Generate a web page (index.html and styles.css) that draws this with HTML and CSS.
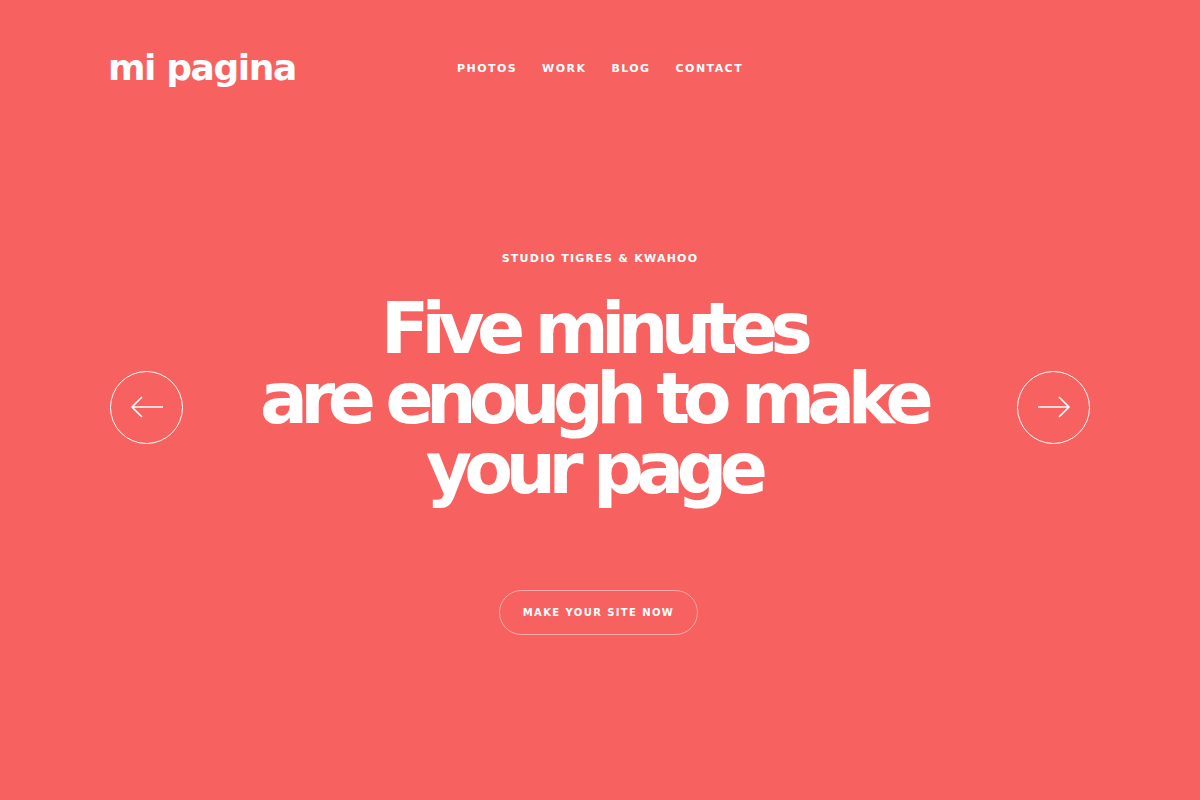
FILE: index.html
```html
<!DOCTYPE html>
<html lang="en">
<head>
<meta charset="utf-8">
<title>mi pagina</title>
<link rel="stylesheet" href="styles.css">
</head>
<body>
<div class="page">
  <header class="header">
    <div class="logo">mi pagina</div>
    <nav class="nav">
      <a href="#">Photos</a>
      <a href="#">Work</a>
      <a href="#">Blog</a>
      <a href="#">Contact</a>
    </nav>
  </header>
  <main class="hero">
    <p class="kicker">Studio Tigres &amp; Kwahoo</p>
    <div class="slider">
      <button class="arrow" aria-label="Previous">
        <svg width="34" height="24" viewBox="0 0 34 24"><path d="M33 12H2M12 2L2 12L12 22" fill="none" stroke="#fff" stroke-width="1.6"/></svg>
      </button>
      <h1 class="title">Five minutes<br>are enough to make<br>your page</h1>
      <button class="arrow" aria-label="Next">
        <svg width="34" height="24" viewBox="0 0 34 24"><path d="M1 12H32M22 2L32 12L22 22" fill="none" stroke="#fff" stroke-width="1.6"/></svg>
      </button>
    </div>
    <a class="cta" href="#">Make your site now</a>
  </main>
</div>
</body>
</html>
```
FILE: styles.css
```css
html, body {
  margin: 0;
  padding: 0;
}
body {
  background: #f76261;
  color: #fff;
  font-family: "DejaVu Sans", "Open Sans", sans-serif;
}
.page {
  width: 1200px;
  height: 800px;
  overflow: hidden;
}
.header {
  display: flex;
  align-items: center;
  padding: 44px 0 0 108px;
  height: 46px;
}
.logo {
  font-size: 36px;
  font-weight: 700;
  letter-spacing: -1.4px;
  width: 188px;
  white-space: nowrap;
}
.nav {
  display: flex;
  gap: 25px;
  margin-left: 161px;
  margin-top: 2px;
}
.nav a {
  color: #fff;
  text-decoration: none;
  text-transform: uppercase;
  font-size: 11px;
  font-weight: 700;
  letter-spacing: 1.45px;
}
.hero {
  display: flex;
  flex-direction: column;
  align-items: center;
  padding-top: 161px;
}
.kicker {
  margin: 0;
  font-size: 11px;
  font-weight: 700;
  letter-spacing: 1.25px;
  text-transform: uppercase;
  line-height: 16px;
}
.slider {
  width: 980px;
  display: flex;
  align-items: center;
  justify-content: space-between;
  margin-top: 27px;
}
.arrow {
  width: 73px;
  height: 73px;
  margin-top: 16px;
  border-radius: 50%;
  border: 1px solid #fff;
  background: transparent;
  display: flex;
  align-items: center;
  justify-content: center;
  padding: 0;
  cursor: pointer;
}
.title {
  margin: 0;
  padding-right: 14px;
  text-align: center;
  font-size: 71px;
  line-height: 70px;
  font-weight: 700;
  letter-spacing: -7.6px;
}
.cta {
  margin-top: 86px;
  width: 197px;
  height: 43px;
  margin-right: 3px;
  border: 1px solid rgba(255,255,255,0.45);
  border-radius: 23px;
  display: flex;
  align-items: center;
  justify-content: center;
  color: #fff;
  text-decoration: none;
  text-transform: uppercase;
  font-size: 10px;
  font-weight: 700;
  letter-spacing: 1.4px;
}
```
